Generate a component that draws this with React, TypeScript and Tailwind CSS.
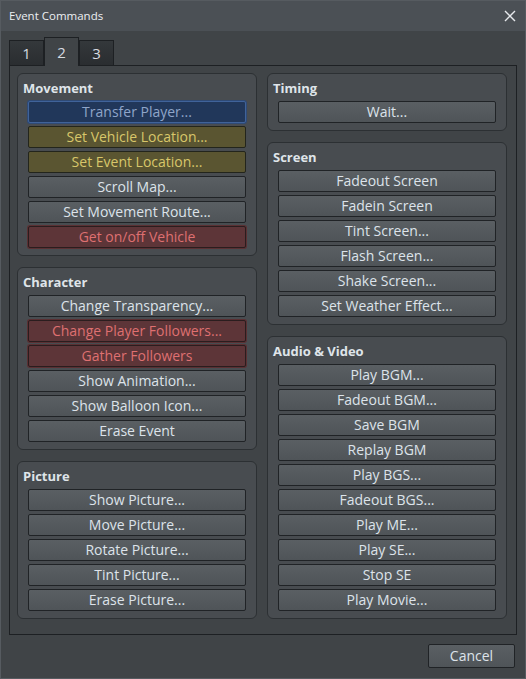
import React from 'react';

type Tone = 'normal' | 'blue' | 'yellow' | 'red';

interface Cmd {
  label: string;
  tone?: Tone;
}

const LEFT: { title: string; items: Cmd[] }[] = [
  {
    title: 'Movement',
    items: [
      { label: 'Transfer Player...', tone: 'blue' },
      { label: 'Set Vehicle Location...', tone: 'yellow' },
      { label: 'Set Event Location...', tone: 'yellow' },
      { label: 'Scroll Map...' },
      { label: 'Set Movement Route...' },
      { label: 'Get on/off Vehicle', tone: 'red' },
    ],
  },
  {
    title: 'Character',
    items: [
      { label: 'Change Transparency...' },
      { label: 'Change Player Followers...', tone: 'red' },
      { label: 'Gather Followers', tone: 'red' },
      { label: 'Show Animation...' },
      { label: 'Show Balloon Icon...' },
      { label: 'Erase Event' },
    ],
  },
  {
    title: 'Picture',
    items: [
      { label: 'Show Picture...' },
      { label: 'Move Picture...' },
      { label: 'Rotate Picture...' },
      { label: 'Tint Picture...' },
      { label: 'Erase Picture...' },
    ],
  },
];

const RIGHT: { title: string; items: Cmd[] }[] = [
  { title: 'Timing', items: [{ label: 'Wait...' }] },
  {
    title: 'Screen',
    items: [
      { label: 'Fadeout Screen' },
      { label: 'Fadein Screen' },
      { label: 'Tint Screen...' },
      { label: 'Flash Screen...' },
      { label: 'Shake Screen...' },
      { label: 'Set Weather Effect...' },
    ],
  },
  {
    title: 'Audio & Video',
    items: [
      { label: 'Play BGM...' },
      { label: 'Fadeout BGM...' },
      { label: 'Save BGM' },
      { label: 'Replay BGM' },
      { label: 'Play BGS...' },
      { label: 'Fadeout BGS...' },
      { label: 'Play ME...' },
      { label: 'Play SE...' },
      { label: 'Stop SE' },
      { label: 'Play Movie...' },
    ],
  },
];

// 버튼 톤별 색상
function CmdButton({ label, tone = 'normal' }: Cmd) {
  if (tone === 'blue') {
    return (
      <div className="h-[22px] rounded-[2px] border border-[#40639a] bg-[#21375a] text-center leading-[20px] text-[#8fa5c9] shadow-[0_0_0_1px_#2f4a75]">
        {label}
      </div>
    );
  }
  if (tone === 'yellow') {
    return (
      <div className="h-[22px] rounded-[2px] border border-[#23251c] bg-[#5a5531] text-center leading-[20px] text-[#d8c76a]">
        {label}
      </div>
    );
  }
  if (tone === 'red') {
    return (
      <div className="h-[22px] rounded-[2px] border border-[#2a1d1e] bg-[#5d3538] text-center leading-[20px] text-[#df7071] shadow-[0_0_0_1px_#5a3033]">
        {label}
      </div>
    );
  }
  return (
    <div className="h-[22px] rounded-[2px] border border-[#202326] bg-gradient-to-b from-[#5a5f63] to-[#4f5458] text-center leading-[20px] text-[#dde3ea]">
      {label}
    </div>
  );
}

function Group({ title, items }: { title: string; items: Cmd[] }) {
  return (
    <div className="rounded-[6px] border border-[#2c3033] bg-[#484c50] pt-[5px] pb-[7px]">
      <div className="h-[18px] pl-[5px] text-[13px] font-bold leading-[18px] text-[#dfe4e9]">{title}</div>
      <div className="mx-[10px] mt-[4px] flex flex-col gap-[3px] text-[14px]">
        {items.map((c) => (
          <CmdButton key={c.label} {...c} />
        ))}
      </div>
    </div>
  );
}

export default function App() {
  return (
    <div
      className="flex h-[679px] w-[526px] flex-col border border-[#565b60] bg-[#404447] text-[13px]"
      style={{ fontFamily: '"Open Sans", "Noto Sans", sans-serif' }}
    >
      {/* 타이틀 바 */}
      <div className="flex h-[30px] items-center justify-between bg-[#4b5055] pl-[8px] pr-[9px]">
        <span className="text-[11.5px] text-[#eceff2]">Event Commands</span>
        <svg width="12" height="12" viewBox="0 0 12 12" className="mt-[-1px]">
          <path d="M1 1 L11 11 M11 1 L1 11" stroke="#e6e9ec" strokeWidth="1.4" />
        </svg>
      </div>

      <div className="flex flex-1 flex-col px-[8px] pt-[6px]">
        {/* 탭 */}
        <div className="flex h-[28px] items-end">
          <div className="flex h-[25px] w-[35px] items-center justify-center border border-b-0 border-[#1d2023] bg-gradient-to-b from-[#34383b] to-[#2a2d30] text-[15px] text-[#d6dbe0]">
            1
          </div>
          <div className="relative z-10 mb-[-1px] flex h-[29px] w-[35px] items-center justify-center border border-b-0 border-[#1d2023] bg-[#404447] text-[15px] text-[#d6dbe0]">
            2
          </div>
          <div className="flex h-[25px] w-[35px] items-center justify-center border border-b-0 border-[#1d2023] bg-gradient-to-b from-[#34383b] to-[#2a2d30] text-[15px] text-[#d6dbe0]">
            3
          </div>
        </div>

        {/* 탭 패널 */}
        <div className="h-[570px] w-[508px] border border-[#1d2023] pt-[7px] pl-[7px]">
          <div className="grid grid-cols-[240px_240px] gap-x-[10px]">
            <div className="flex flex-col gap-[11px]">
              {LEFT.map((g) => (
                <Group key={g.title} {...g} />
              ))}
            </div>
            <div className="flex flex-col gap-[11px]">
              {RIGHT.map((g) => (
                <Group key={g.title} {...g} />
              ))}
            </div>
          </div>
        </div>

        <div className="mt-[9px] flex justify-end pr-[2px]">
          <div className="h-[24px] w-[87px] rounded-[2px] border border-[#202326] bg-gradient-to-b from-[#5a5f63] to-[#4f5458] text-center text-[14px] leading-[22px] text-[#dde3ea]">
            Cancel
          </div>
        </div>
      </div>
    </div>
  );
}
